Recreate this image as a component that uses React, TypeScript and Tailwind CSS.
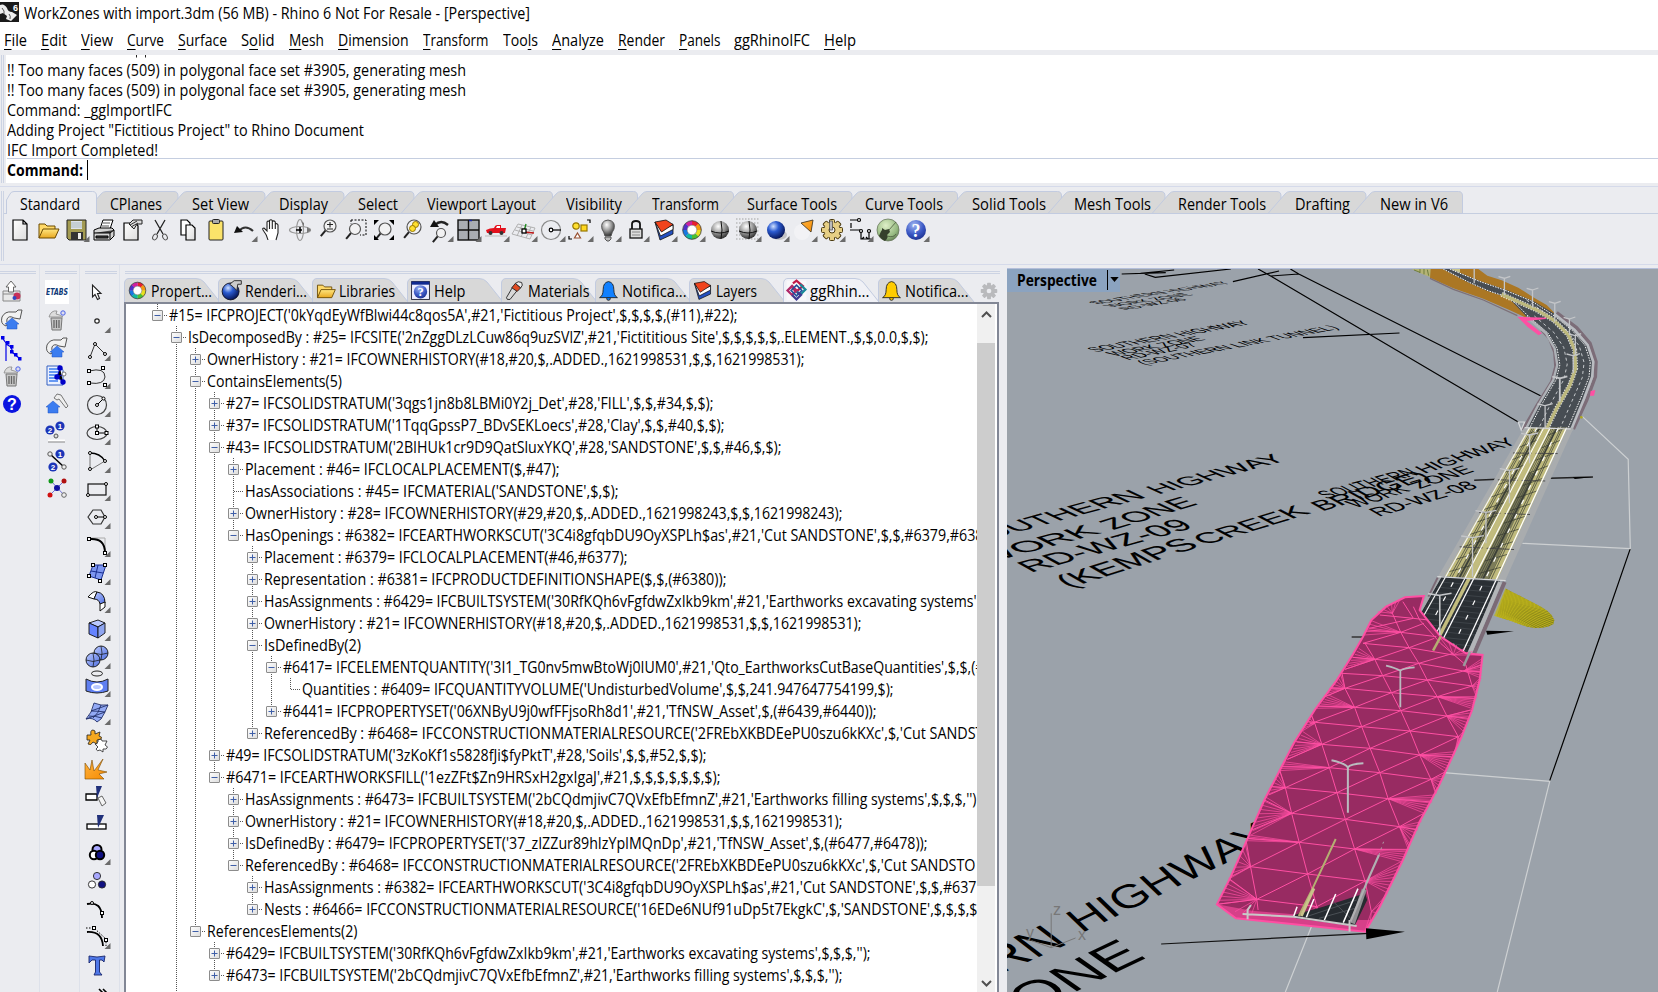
import React, { useLayoutEffect, useRef } from "react";

/* Text squeezed or stretched to a measured width */
function Fit({ w, children, className = "" }: { w: number; children: React.ReactNode; className?: string }) {
  const ref = useRef<HTMLSpanElement>(null);
  useLayoutEffect(() => {
    const el = ref.current;
    if (!el) return;
    el.style.transform = "none";
    const natural = el.getBoundingClientRect().width;
    if (natural > 0) el.style.transform = `scaleX(${w / natural})`;
  }, [w]);
  return (
    <span className={"inline-block shrink-0 whitespace-nowrap " + className} style={{ width: w }}>
      <span ref={ref} className="inline-block origin-left whitespace-nowrap">
        {children}
      </span>
    </span>
  );
}

function Defs() {
  return (
    <svg className="absolute h-0 w-0">
      <defs>
        <radialGradient id="grayBall" cx="0.4" cy="0.3" r="0.75">
          <stop offset="0" stopColor="#fff" />
          <stop offset="0.5" stopColor="#999" />
          <stop offset="1" stopColor="#222" />
        </radialGradient>
        <radialGradient id="blueBall" cx="0.35" cy="0.3" r="0.75">
          <stop offset="0" stopColor="#cfe0ff" />
          <stop offset="0.4" stopColor="#2a5ad0" />
          <stop offset="1" stopColor="#04104f" />
        </radialGradient>
        <radialGradient id="helpBall" cx="0.4" cy="0.25" r="0.8">
          <stop offset="0" stopColor="#9fb4f0" />
          <stop offset="0.6" stopColor="#3a57c4" />
          <stop offset="1" stopColor="#1c2f8c" />
        </radialGradient>
        <radialGradient id="greenBall" cx="0.4" cy="0.3" r="0.75">
          <stop offset="0" stopColor="#dff0c8" />
          <stop offset="0.7" stopColor="#95b980" />
          <stop offset="1" stopColor="#5f7a50" />
        </radialGradient>
        <linearGradient id="gold" x1="0" y1="0" x2="0" y2="1">
          <stop offset="0" stopColor="#ffe680" />
          <stop offset="1" stopColor="#e8a820" />
        </linearGradient>
        <linearGradient id="flame" x1="0" y1="0" x2="1" y2="1">
          <stop offset="0" stopColor="#ffb340" />
          <stop offset="1" stopColor="#f58a00" />
        </linearGradient>
        <linearGradient id="paper" x1="0" y1="0" x2="1" y2="1">
          <stop offset="0" stopColor="#fff" />
          <stop offset="1" stopColor="#dcdcdc" />
        </linearGradient>
        <linearGradient id="surf" x1="0" y1="0" x2="1" y2="1">
          <stop offset="0" stopColor="#b9c8ff" />
          <stop offset="1" stopColor="#4f6fe0" />
        </linearGradient>
      </defs>
    </svg>
  );
}

const Pt = ({ x, y }: { x: number; y: number }) => (
  <rect x={x - 1.5} y={y - 1.5} width="3" height="3" fill="#fff" stroke="#000" />
);
const Dot = ({ x, y }: { x: number; y: number }) => <circle cx={x} cy={y} r="1.5" fill="#fff" stroke="#000" />;
const Lens = ({ x = 16, y = 11, r = 6 }: { x?: number; y?: number; r?: number }) => (
  <g fill="none">
    <path d={`M${x - r * 0.7} ${y + r * 0.7}L${x - r * 0.7 - 5} ${y + r * 0.7 + 6}`} stroke="#222" strokeWidth="2" />
    <circle cx={x} cy={y} r={r} fill="#f4f4f4" fillOpacity="0.8" stroke="#555" strokeWidth="1.2" />
  </g>
);
const Wheel = () => (
  <g fill="none" strokeWidth="4.4">
    {["#e8202c", "#f59a10", "#e8e020", "#4cc030", "#10b8a0", "#1878e0", "#5030c8", "#d020a0"].map((c, i) => (
      <path key={c} d="M14 7A7.2 7.2 0 0 1 19.2 9.1" stroke={c} transform={`rotate(${i * 45} 14 14)`} />
    ))}
    <circle cx="14" cy="14" r="9.3" stroke="#333" strokeWidth="0.8" />
    <circle cx="14" cy="14" r="4.8" stroke="#555" strokeWidth="0.5" fill="#fff" />
  </g>
);
const LayersIcon = () => (
  <g stroke="#111" strokeWidth="0.8" strokeLinejoin="round">
    <path d="M5 6L10 24L23 18V8L11 14Z" fill="#2450c0" />
    <path d="M5 6L10.500 20L23 13.500V9L11 14Z" fill="#fff" />
    <path d="M5 6L16 4L23 8.500L11.500 16Z" fill="#f0441c" />
  </g>
);
const Folder = () => (
  <g stroke="#6b4a00" strokeWidth="1" strokeLinejoin="round">
    <path d="M5 22V8H11L13 10H21V13" fill="#ffd968" />
    <path d="M5 22L9 13H25L21 22Z" fill="url(#gold)" />
  </g>
);
const Trash = () => (
  <g>
    <path d="M8 12H19L18 24H9Z" fill="#c8c8c8" stroke="#777" />
    <path d="M11 14V22M13.500 14V22M16 14V22" stroke="#666" strokeWidth="1.300" />
    <path d="M6 11Q8 4 14 5L13 8Q18 9 20 11Z" fill="#ddd" stroke="#888" strokeWidth="0.800" />
    <circle cx="20" cy="7" r="2.200" fill="#dde" stroke="#4a62e8" />
  </g>
);
const ReloadHouse = () => (
  <g>
    <path d="M8 20Q2 18 4 11Q7 5 14 6L18 6L20 4H24L22 13L16 12Q11 9 9 13Q8 16 10 17Z" fill="#f2f2f2" stroke="#555" strokeWidth="1" />
    <path d="M14 12L21 18H19V23H9V18H7Z" fill="#3b7cf0" stroke="#1c50c0" strokeWidth="0.500" />
  </g>
);
const Num = ({ x, y, n }: { x: number; y: number; n: string }) => (
  <g>
    <circle cx={x} cy={y} r="4.600" fill="#1c35b8" />
    <text x={x} y={y + 3} textAnchor="middle" fontSize="8" fontWeight="700" fill="#fff" fontFamily="Liberation Sans">
      {n}
    </text>
  </g>
);
const Bell = ({ c }: { c: string }) => (
  <g stroke="#222" strokeWidth="1">
    <circle cx="14" cy="23" r="2" fill={c} />
    <path d="M4 22Q8 20 8 13Q8 5 14 4Q20 5 20 13Q20 20 24 22Z" fill={c} />
  </g>
);
const Gear = ({ c, s = "none", hole = "#ebecf0" }: { c: string; s?: string; hole?: string }) => (
  <g>
    {[0, 45, 90, 135].map((a) => (
      <rect key={a} x="11.500" y="3.500" width="5" height="21" rx="1" fill={c} stroke={s} transform={`rotate(${a} 14 14)`} />
    ))}
    <circle cx="14" cy="14" r="7.800" fill={c} />
    <circle cx="14" cy="14" r="3" fill={hole} stroke={s} />
  </g>
);

const icons: Record<string, React.ReactNode> = {
  new: <path d="M7 4H17L21 8V24H7ZM17 4V8H21" fill="url(#paper)" stroke="#000" strokeWidth="1.200" />,
  open: <Folder />,
  save: (
    <g>
      <path d="M5 4H24V24H7L5 22Z" fill="#a39b52" stroke="#222" />
      <rect x="9" y="5" width="11" height="8" fill="#dfe3ea" />
      <path d="M9 7H20M9 9H20M9 11H20" stroke="#9aa" strokeWidth="0.700" />
      <rect x="9" y="16" width="12" height="8" fill="#333" />
      <rect x="16" y="17" width="3" height="6" fill="#eee" />
    </g>
  ),
  print: (
    <g stroke="#000" strokeLinejoin="round">
      <path d="M10 13L13 4H23L20 13Z" fill="#fff" />
      <path d="M13 7H20M12 10H19" stroke="#555" />
      <path d="M4 14L9 12H22L24 14V20L20 24H4Z" fill="#d4d4d4" />
      <path d="M4 17H20L24 14M6 20H18V22H6ZM20 17V23" fill="#444" />
    </g>
  ),
  props: (
    <g>
      <path d="M6 7H18L20 10V24H6Z" fill="url(#paper)" stroke="#000" strokeWidth="1.200" />
      <path d="M11 8L15 4H24V8H19L16 13Z" fill="#ddd" stroke="#222" />
      <path d="M12 9L19 5M13 11L20 7" stroke="#333" />
    </g>
  ),
  cut: (
    <g fill="none" stroke="#222">
      <path d="M9 4L17 18M19 4L11 18" strokeWidth="1.300" />
      <ellipse cx="9" cy="21" rx="2.200" ry="3" stroke="#555" transform="rotate(30 9 21)" />
      <ellipse cx="19" cy="21" rx="2.200" ry="3" stroke="#555" transform="rotate(-30 19 21)" />
    </g>
  ),
  copy: (
    <g fill="#fff" stroke="#000" strokeWidth="1.200">
      <path d="M7 4H13L16 7V19H7Z" />
      <path d="M12 9H18L21 12V24H12Z" fill="url(#paper)" />
    </g>
  ),
  paste: (
    <g stroke="#222">
      <rect x="7" y="5" width="14" height="19" rx="1" fill="#fbe36a" />
      <rect x="10.500" y="3.500" width="7" height="4" rx="1" fill="#aaa" />
    </g>
  ),
  undo: (
    <g>
      <path d="M9 15Q15 8 23 15" fill="none" stroke="#333" strokeWidth="2.200" />
      <path d="M4 17L7 10L13 16Z" fill="#111" />
    </g>
  ),
  hand: (
    <path
      d="M10 24Q9 19 5 14Q4 12 6 12L9 15V6Q10 4 11.500 6V13V4.500Q13 3 14.300 4.500V13V5.500Q16 4 17.300 6V13V8Q19 7 20 9V17L18 24"
      fill="#fff"
      stroke="#222"
      strokeWidth="1.100"
    />
  ),
  rotate: (
    <g fill="none" stroke="#999" strokeWidth="1.200">
      <ellipse cx="14" cy="14" rx="10.500" ry="3.500" />
      <ellipse cx="14" cy="14" rx="3.500" ry="10.500" />
      <path d="M10 14H16M14 11V17" stroke="#000" strokeWidth="1.500" />
      <path d="M15 5L18 7V11Z M21 11L25 14L21 17Z" fill="#777" stroke="none" />
    </g>
  ),
  zoom: (
    <g>
      <Lens y={10} />
      <path d="M13 8.500H19M16 6V11.500M13 13H19" stroke="#222" strokeWidth="1.100" />
    </g>
  ),
  zoomwin: (
    <g>
      <path d="M9 4H24V19H18M9 4V8" fill="none" stroke="#000" strokeDasharray="2 1.500" />
      <Lens x={13} y={13} r={5.500} />
    </g>
  ),
  zoomext: (
    <g>
      <Lens x={15} y={13} />
      <path d="M4 4H9L4 9ZM24 4H19L24 9ZM4 24H9L4 19ZM24 24H19L24 19Z" fill="#000" />
    </g>
  ),
  zoomsel: (
    <g>
      <Lens x={16} y={11} r={7} />
      <circle cx="17.500" cy="8.500" r="3" fill="#ffe030" stroke="#987800" />
      <circle cx="14.500" cy="12.500" r="3" fill="#ffe030" stroke="#987800" />
    </g>
  ),
  zoomundo: (
    <g>
      <Lens x={15} y={17} r={4.500} />
      <path d="M9 9Q15 3 22 9" fill="none" stroke="#222" strokeWidth="2.400" />
      <path d="M4 11L8 4L13 11Z" fill="#111" />
    </g>
  ),
  four: (
    <g>
      <rect x="4" y="4" width="21" height="20" fill="#a9adb3" stroke="#111" strokeWidth="1.400" />
      <path d="M14.500 4V24M4 14H25" stroke="#111" strokeWidth="1.400" />
      <path d="M15 4.500H18" stroke="#1828a0" strokeWidth="1.500" />
    </g>
  ),
  car: (
    <g>
      <path d="M4 14Q8 12 12 12Q13 9 15 9H19V12H24L23 17H5Z" fill="#e3111d" />
      <path d="M15 10H18V12H14Z" fill="#fff" />
      <circle cx="8.500" cy="17" r="2" fill="#333" />
      <circle cx="19.500" cy="17" r="2" fill="#333" />
      <path d="M3 20H25" stroke="#bbb" />
    </g>
  ),
  cplane: (
    <g fill="none" stroke="#aaa" strokeWidth="0.900">
      <path d="M8 8L25 12L20 23L2 18ZM7 11L23 15M5 14L22 19M12 9L7 20M16 10L11 21M21 11L16 22" />
      <path d="M14 15L16 8" stroke="#188818" strokeWidth="1.300" />
      <path d="M14 16L24 17" stroke="#c01818" strokeWidth="1.300" />
      <rect x="12" y="13" width="4" height="4" stroke="#000" fill="#fff" strokeWidth="1.300" />
    </g>
  ),
  circ: (
    <g fill="none" stroke="#888" strokeWidth="1.200">
      <circle cx="13" cy="14" r="9.500" />
      <path d="M14 14H23" stroke="#000" />
      <circle cx="13" cy="14" r="1.800" stroke="#000" fill="#fff" />
    </g>
  ),
  osnap: (
    <g fill="none" stroke="#000" strokeWidth="1.200">
      <circle cx="10" cy="10" r="3.200" fill="#ffe030" stroke="#987800" />
      <rect x="15" y="9" width="6" height="6" fill="#ffd820" stroke="#987800" />
      <path d="M11.500 17L14.500 22H8.500Z" fill="#fff" stroke="#985030" />
      <path d="M21 4H24V7M3 20V23H6" />
    </g>
  ),
  bulb: (
    <g>
      <path d="M11 20Q10 16 8 13Q6 5 14 4Q22 5 20 13Q18 16 17 20Z" fill="url(#grayBall)" stroke="#555" />
      <path d="M11 21H17V23L15 25H13L11 23Z" fill="#bbb" stroke="#555" />
    </g>
  ),
  lock: (
    <g stroke="#111">
      <path d="M10 13V8Q10 5 14 5Q18 5 18 8V13" fill="none" strokeWidth="1.800" />
      <rect x="8" y="13" width="12" height="9" fill="#ddd" strokeWidth="1.300" />
      <path d="M10 16H18M10 19H18" stroke="#888" />
    </g>
  ),
  layers: <LayersIcon />,
  wheel: <Wheel />,
  ball: (
    <g>
      <circle cx="14" cy="14" r="9" fill="url(#grayBall)" />
      <path d="M5 15Q14 19 23 15M15 5Q17 14 15 23" fill="none" stroke="#111" />
    </g>
  ),
  ballgrid: (
    <g>
      <path d="M2 3H26M2 7H26M2 11H26M2 15H26M2 19H26M2 23H26" stroke="#bbb" strokeWidth="1.500" strokeDasharray="1.500 1.500" />
      <circle cx="14" cy="14" r="9" fill="url(#grayBall)" />
      <path d="M5 15Q14 19 23 15M15 5Q17 14 15 23" fill="none" stroke="#111" />
    </g>
  ),
  blueball: (
    <g>
      <ellipse cx="17" cy="19" rx="8" ry="5" fill="#aaa" opacity="0.600" />
      <circle cx="14" cy="14" r="9" fill="url(#blueBall)" />
    </g>
  ),
  spot: (
    <g>
      <circle cx="12" cy="16" r="8" fill="#fff" opacity="0.350" />
      <path d="M11 7L23 4L21 16Z" fill="url(#flame)" stroke="#4a3a20" strokeWidth="0.900" />
    </g>
  ),
  gear: (
    <g>
      <Gear c="#e6cf85" s="#4a3a10" />
      <rect x="11.500" y="5" width="3" height="9" fill="#bbb" stroke="#333" strokeWidth="0.600" />
    </g>
  ),
  dim: (
    <g fill="none" stroke="#000" strokeWidth="1.200">
      <path d="M4 4H12M5 7V12M4 14H14M15 14V23H25M23 15V23M16 23L18 21M22 23L20 21" />
      <Dot x={13} y={4} />
      <Dot x={15} y={15} />
      <Dot x={23} y={15} />
    </g>
  ),
  green: (
    <g>
      <circle cx="14" cy="14" r="11" fill="url(#greenBall)" stroke="#6b7a60" strokeWidth="0.800" />
      <path d="M5 20Q7 15 8 14V12L11 14L15 13L16 16L13 19Q15 21 11 25Q7 23 5 20Z" fill="#35402c" />
      <path d="M15 14L22 6M13 20Q20 22 22 18" stroke="#4a5a3e" fill="none" strokeWidth="0.800" />
    </g>
  ),
  help: (
    <g>
      <circle cx="14" cy="14" r="10" fill="url(#helpBall)" />
      <text x="14" y="20.500" textAnchor="middle" fontSize="18" fontWeight="700" fill="#fff" fontFamily="Liberation Serif">
        ?
      </text>
    </g>
  ),
  export: (
    <g>
      <path d="M5 13H22V23H5ZM5 16H22" fill="#e8e8e8" stroke="#888" />
      <path d="M13 3L18 9H15.500V14H10.500V9H8Z" fill="#fff" stroke="#666" />
      <circle cx="19" cy="18" r="3.500" fill="#c83058" />
      <circle cx="16.500" cy="20" r="2" fill="#3048c0" />
    </g>
  ),
  reload: <ReloadHouse />,
  tree: (
    <g fill="#0000e8">
      <path d="M5 5L8 9V27M8 10L13 13L15 19L21 24" fill="none" stroke="#0000e8" strokeWidth="1.200" />
      <rect x="3" y="2" width="3.500" height="3.500" />
      <rect x="8" y="7" width="3.500" height="3.500" />
      <rect x="12" y="11" width="3.500" height="3.500" />
      <rect x="12" y="16" width="3.500" height="3.500" />
      <rect x="16" y="19" width="3.500" height="3.500" />
      <rect x="20" y="23" width="3.500" height="3.500" />
    </g>
  ),
  trash: <Trash />,
  help2: (
    <g>
      <circle cx="14" cy="14" r="9" fill="#0a14e0" />
      <text x="14" y="20" textAnchor="middle" fontSize="16" fontWeight="700" fill="#fff" fontFamily="Liberation Sans">
        ?
      </text>
    </g>
  ),
  etabs: (
    <g>
      <rect x="2" y="2" width="24" height="24" fill="#fff" />
      <text x="3" y="17" fontSize="8" fontWeight="700" fontStyle="italic" fill="#103a78" fontFamily="DejaVu Sans" textLength="22" lengthAdjust="spacingAndGlyphs">
        ETABS
      </text>
    </g>
  ),
  docblue: (
    <g>
      <path d="M4 4H17L20 8V23H4Z" fill="#eaf0ff" stroke="#3560c0" />
      <path d="M6 7H15M6 10H15M6 13H15M6 16H15M6 19H15" stroke="#3b7cf0" strokeWidth="1.500" />
      <path d="M17 6L14 15L20 20M14 15L21 12" stroke="#0000c8" />
      <g fill="#0000c8">
        <circle cx="17" cy="6" r="2.700" />
        <circle cx="14" cy="15" r="2.700" />
        <circle cx="20" cy="20" r="2.700" />
      </g>
      <circle cx="21" cy="12" r="2" fill="#fff" stroke="#777" />
    </g>
  ),
  hammer: (
    <g>
      <path d="M10 11L17 17H15V23H5V17H3Z" fill="#3b7cf0" stroke="#1c50c0" strokeWidth="0.500" />
      <path d="M11 8L14 4L18 5L25 16L23 18L16 9L14 10Z" fill="#eee" stroke="#777" />
    </g>
  ),
  nums1: (
    <g>
      <Num x={7} y={12} n="2" />
      <Num x={17} y={8} n="1" />
      <circle cx="13" cy="18" r="2" fill="#ddd" stroke="#555" />
      <path d="M5 22.500H22" stroke="#fff" strokeWidth="2" />
      <path d="M5 24H22" stroke="#888" />
    </g>
  ),
  nums2: (
    <g>
      <path d="M7 8L21 21" stroke="#000" strokeWidth="1.500" />
      <Num x={17} y={8} n="1" />
      <Num x={10} y={21} n="2" />
      <circle cx="7" cy="8" r="2.200" fill="#eee" stroke="#555" />
      <circle cx="21" cy="21" r="2.200" fill="#eee" stroke="#555" />
    </g>
  ),
  net: (
    <g>
      <path d="M8 7L21 21M21 7L7 21" stroke="#7070d8" />
      <circle cx="8" cy="7" r="2.500" fill="#109818" />
      <circle cx="21" cy="7" r="2.500" fill="#b01010" />
      <circle cx="14" cy="14" r="3" fill="#1010a0" />
      <circle cx="7" cy="21" r="2.500" fill="#d01010" />
      <circle cx="21" cy="21" r="2.300" fill="#eee" stroke="#666" />
    </g>
  ),
  pointer: <path d="M9.500 6V18L12 15.500L14.500 20.500L16.500 19.500L14.500 14.500H18Z" fill="#fff" stroke="#222" strokeWidth="1.100" />,
  point: <circle cx="14" cy="14" r="2.200" fill="#fff" stroke="#222" strokeWidth="1.200" />,
  poly: (
    <g>
      <path d="M7 22L12 9L22 19" fill="none" stroke="#333" />
      <Dot x={7} y={22} />
      <Dot x={12} y={9} />
      <Dot x={22} y={19} />
    </g>
  ),
  curve: (
    <g>
      <path d="M6 8Q22 4 22 14Q21 22 7 20" fill="none" stroke="#333" />
      <Pt x={6} y={8} />
      <Pt x={20} y={5} />
      <Pt x={6} y={20} />
      <Pt x={22} y={22} />
    </g>
  ),
  circle: (
    <g>
      <circle cx="14" cy="14" r="9.500" fill="none" stroke="#444" strokeWidth="1.200" />
      <path d="M14 14L20 8" stroke="#000" />
      <Dot x={14} y={14} />
      <Dot x={20.500} y={7.500} />
    </g>
  ),
  ellipse: (
    <g>
      <ellipse cx="14" cy="14" rx="10" ry="6.500" fill="none" stroke="#444" strokeWidth="1.200" />
      <path d="M14 14H23M14 14V8" stroke="#000" />
      <Pt x={14} y={14} />
      <Pt x={14} y={7.500} />
      <Pt x={23.500} y={14} />
    </g>
  ),
  arc: (
    <g>
      <path d="M7 23V6M7 23L22 14" fill="none" stroke="#777" />
      <path d="M7 6Q17 6 22 14" fill="none" stroke="#000" strokeWidth="1.300" />
      <Dot x={7} y={6} />
      <Dot x={22} y={14} />
      <Dot x={7} y={22} />
    </g>
  ),
  rect: (
    <g>
      <rect x="5" y="9" width="18" height="11" fill="none" stroke="#111" strokeWidth="1.200" />
      <Dot x={23} y={9} />
      <Dot x={5} y={20} />
    </g>
  ),
  hex: (
    <g>
      <path d="M5 14L10 7H18L22 14L18 21H10Z" fill="none" stroke="#333" strokeWidth="1.200" />
      <path d="M14 14H22" stroke="#000" />
      <Dot x={13} y={14} />
      <Dot x={22} y={14} />
    </g>
  ),
  fillet: (
    <g>
      <path d="M7 7H22V22" fill="none" stroke="#aaa" />
      <path d="M7 8Q22 7 22 22" fill="none" stroke="#000" strokeWidth="2" />
      <Pt x={6} y={8} />
      <Pt x={22} y={22} />
    </g>
  ),
  srfpts: (
    <g>
      <path d="M10 6L23 6L18 21L6 17Z" fill="#7d96f0" stroke="#1a2f90" />
      <path d="M8 12L20 14M15 6L12 19" stroke="#1a2f90" />
      <Pt x={10} y={6} />
      <Pt x={22} y={6} />
      <Pt x={6} y={17} />
      <Pt x={17} y={22} />
    </g>
  ),
  bend: (
    <g stroke="#111">
      <path d="M5 10Q11 3 14 5L11 12Z" fill="#fff" />
      <path d="M14 5Q22 6 22 16L17 17Q16 12 11 12Z" fill="url(#surf)" />
      <path d="M17 17L22 15V20L17 24Z" fill="#fff" />
    </g>
  ),
  box: (
    <g stroke="#111" strokeLinejoin="round" strokeWidth="0.900">
      <path d="M6 8L15 5L22 8L15 12Z" fill="#b9c8ff" />
      <path d="M6 8L15 12V23L6 19Z" fill="#6684ff" />
      <path d="M15 12L22 8V18L15 23Z" fill="#8fa5f0" />
    </g>
  ),
  balls: (
    <g stroke="#111" strokeWidth="0.900">
      <circle cx="18" cy="10" r="7" fill="url(#surf)" />
      <circle cx="10" cy="17" r="7" fill="url(#surf)" />
      <path d="M11 10Q18 13 25 10M18 3Q20 10 18 17M3 17Q10 20 17 17M10 10Q12 17 10 24" fill="none" strokeWidth="0.700" />
    </g>
  ),
  project: (
    <g stroke="#222">
      <ellipse cx="14" cy="2.500" rx="5.500" ry="2.500" fill="none" />
      <path d="M3 8Q14 14 25 8V20Q14 24 3 20Z" fill="#5f7ff0" />
      <ellipse cx="14" cy="16" rx="5" ry="3" fill="#b8c8ff" stroke="#fff" strokeWidth="2" />
    </g>
  ),
  mesh: (
    <g stroke="#22306a" strokeWidth="0.900">
      <path d="M11 4Q18 7 25 6Q22 14 18 20L14 23Q10 18 3 20Q9 14 11 4Z" fill="#93aaf5" />
      <path d="M8 12Q15 12 22 13M18 6Q16 14 10 19M6 17Q13 17 19 19M3 20L22 13M8 12L25 6" fill="none" />
    </g>
  ),
  puzzle: (
    <g stroke="#222" strokeWidth="0.800">
      <path d="M12 17L15 15Q14 12 17 12Q19 12 19 14L24 14L22 18Q26 20 23 22L20 22L20 25L17 23Q14 25 13 22L15 20Z" fill="#fff" />
      <path d="M4 8L8 8Q7 3 10 3Q13 3 12 7L17 5L16 9Q20 10 18 12L14 13L14 17L10 15Q8 19 5 17L7 13L4 13Z" fill="#f5a820" />
    </g>
  ),
  explode: <path d="M2 24V8L7 15L9 5L11 16L20 4L15 15L24 17L16 19L21 24Z" fill="url(#flame)" stroke="#7a4a00" strokeWidth="0.600" />,
  trim: (
    <g stroke="#000">
      <path d="M3 11H14V17H3Z" fill="#fff" strokeWidth="1.300" />
      <path d="M15 15L19 13L23 20L19 23Z" fill="#f4f4f4" stroke="#666" />
      <path d="M13 3H19L14 15Z" fill="#20307a" stroke="none" />
    </g>
  ),
  split: (
    <g>
      <rect x="4" y="13" width="19" height="5" fill="#fff" stroke="#000" strokeWidth="1.300" />
      <path d="M14 4H21L15 17Z" fill="#20307a" />
    </g>
  ),
  group: (
    <g stroke="#000" strokeWidth="2">
      <circle cx="14" cy="10.500" r="4.500" fill="#a8a8ff" />
      <circle cx="11" cy="16" r="4.200" fill="#fff" />
      <circle cx="17" cy="16" r="4.200" fill="#101080" />
    </g>
  ),
  ungroup: (
    <g stroke="#222" strokeWidth="0.900">
      <circle cx="14" cy="9" r="3.600" fill="#a8a8ff" />
      <circle cx="9" cy="17.500" r="3.600" fill="#fff" />
      <circle cx="19" cy="17.500" r="3.600" fill="#101080" />
    </g>
  ),
  cvedit: (
    <g>
      <path d="M4 9Q19 6 19 23" fill="none" stroke="#000" strokeWidth="1.800" />
      <Dot x={9} y={8} />
      <Pt x={19} y={18} />
    </g>
  ),
  cvcp: (
    <g>
      <path d="M4 9Q19 8 20 23" fill="none" stroke="#000" strokeWidth="1.800" />
      <path d="M3 5H11L23 16V23" fill="none" stroke="#000" strokeDasharray="1.500 1.500" />
      <Pt x={11} y={5} />
      <Pt x={23} y={17} />
    </g>
  ),
  text: (
    <g stroke="#16246a" strokeWidth="0.900">
      <path d="M6 5Q14 7 22 5L21 11L19 9H16.500V21L19 24H11L12.500 21V9H9L6 12Z" fill="#4f78e8" />
    </g>
  ),
  more: <path d="M16 10L20 14L16 18M20 10L24 14L20 18" fill="none" stroke="#000" strokeWidth="1.600" />,
  render: (
    <g>
      <circle cx="13" cy="15" r="9.500" fill="url(#blueBall)" stroke="#112" />
      <path d="M12 7L17 3H25V7H21L20 14L16 10Z" fill="#ccc" stroke="#222" />
    </g>
  ),
  helpwin: (
    <g>
      <rect x="4" y="4" width="20" height="20" fill="#eef" stroke="#223" />
      <rect x="4" y="4" width="20" height="3.500" fill="#112a90" />
      <circle cx="14" cy="15.500" r="7.500" fill="url(#helpBall)" />
      <text x="14" y="20.500" textAnchor="middle" fontSize="14" fontWeight="700" fill="#fff" fontFamily="Liberation Serif">
        ?
      </text>
    </g>
  ),
  tube: (
    <g stroke="#222" strokeLinejoin="round">
      <path d="M5 22L12 10L17 14L9 24Q5 25 5 22Z" fill="#d8d8d8" />
      <path d="M11 11L15 6L21 11L17 15Z" fill="#e04a20" />
      <path d="M15 6Q18 3 22 5Q24 8 21 11Z" fill="#eee" />
    </g>
  ),
  bellb: <Bell c="#1080ff" />,
  belly: <Bell c="#ffcc00" />,
  gg: (
    <g fill="none" strokeWidth="2.600">
      <rect x="3" y="3" width="22" height="22" fill="#f8f8fa" stroke="none" />
      <path d="M10 6L14 3L21 9L14 15L9 11" stroke="#c01848" />
      <path d="M18 7L24 13L18 19L14 15" stroke="#188898" />
      <path d="M10 8L4 14L9 19L14 14L10 10" stroke="#b02868" />
      <path d="M8 14L14 8L20 14L14 20Z" stroke="#20509c" strokeWidth="1.800" />
      <path d="M9 19L14 24L19 19L15 16" stroke="#403a90" />
    </g>
  ),
};

function Icon({ n, fly, size = "h-7 w-7" }: { n: string; fly?: boolean; size?: string }) {
  return (
    <svg viewBox="0 0 28 28" className={"shrink-0 overflow-visible " + size}>
      {icons[n]}
      {fly && <path d="M27.500 20V26H21.500Z" fill="#6b6b6b" />}
    </svg>
  );
}

const menu: [string, string, string, number, number][] = [
  ["", "F", "ile", 4, 27],
  ["", "E", "dit", 41, 67],
  ["", "V", "iew", 81, 113],
  ["", "C", "urve", 127, 164],
  ["", "S", "urface", 178, 227],
  ["S", "o", "lid", 241, 274.5],
  ["", "M", "esh", 289, 324],
  ["", "D", "imension", 338, 408.5],
  ["", "T", "ransform", 423, 488.5],
  ["Too", "l", "s", 503, 538],
  ["", "A", "nalyze", 552, 604],
  ["", "R", "ender", 618, 665],
  ["", "P", "anels", 678.5, 720],
  ["ggRhinoIFC", "", "", 734, 810],
  ["", "H", "elp", 824, 856],
];

const log: [string, number][] = [
  ["!! Too many faces (509) in polygonal face set #3905, generating mesh", 459],
  ["!! Too many faces (509) in polygonal face set #3905, generating mesh", 459],
  ["Command: _ggImportIFC", 165],
  ['Adding Project "Fictitious Project" to Rhino Document', 357],
  ["IFC Import Completed!", 151],
];

const toolTabs: [string, number, number, number, number][] = [
  ["Standard", 6, 96.5, 20, 80],
  ["CPlanes", 96.5, 177.5, 110, 162],
  ["Set View", 177.5, 264.5, 192, 249],
  ["Display", 264.5, 343.5, 279, 328],
  ["Select", 343.5, 413.5, 358, 398],
  ["Viewport Layout", 413.5, 552, 427, 536],
  ["Visibility", 552, 637.5, 566, 622],
  ["Transform", 637.5, 733, 651.5, 718.5],
  ["Surface Tools", 733, 852, 747, 837],
  ["Curve Tools", 852, 957.5, 865, 943],
  ["Solid Tools", 957.5, 1061, 972, 1046],
  ["Mesh Tools", 1061, 1165, 1074, 1151],
  ["Render Tools", 1165, 1281, 1178, 1266],
  ["Drafting", 1281, 1366, 1295, 1350],
  ["New in V6", 1366, 1462.5, 1380, 1448],
];

const toolbar =
  "new open save* print props cut copy paste undo* hand rotate zoom zoomwin zoomext zoomsel zoomundo* four* car* cplane* circ* osnap* bulb* lock* layers* wheel* ball ballgrid* blueball* spot* gear* dim* green help*".split(" ");
const side1 = "export reload tree trash help2".split(" ");
const side2 = "etabs trash reload docblue hammer nums1 nums2 net".split(" ");
const side3 =
  "pointer point* poly* curve* circle* ellipse* arc* rect* hex* fillet* srfpts* bend* box* balls* project* mesh* puzzle explode trim split group* ungroup cvedit cvcp* text more".split(" ");

const panelTabs: [string, string, number][] = [
  ["wheel", "Propert...", 61],
  ["render", "Renderi...", 62],
  ["open", "Libraries", 56],
  ["helpwin", "Help", 31.5],
  ["tube", "Materials", 61.5],
  ["bellb", "Notifica...", 64.5],
  ["layers", "Layers", 41],
  ["gg", "ggRhin...", 59.5],
  ["belly", "Notifica...", 63.5],
];

/* level, expander, label, right edge of the label */
const rows: [number, string, string, number][] = [
  [0, "-", "#15= IFCPROJECT('0kYqdEyWfBlwi44c8qos5A',#21,'Fictitious Project',$,$,$,$,(#11),#22);", 737],
  [1, "-", "IsDecomposedBy : #25= IFCSITE('2nZggDLzLCuw86q9uzSVlZ',#21,'Fictititious Site',$,$,$,$,$,.ELEMENT.,$,$,0.0,$,$);", 928],
  [2, "+", "OwnerHistory : #21= IFCOWNERHISTORY(#18,#20,$,.ADDED.,1621998531,$,$,1621998531);", 804],
  [2, "-", "ContainsElements(5)", 341.5],
  [3, "+", "#27= IFCSOLIDSTRATUM('3qgs1jn8b8LBMi0Y2j_Det',#28,'FILL',$,$,#34,$,$);", 713],
  [3, "+", "#37= IFCSOLIDSTRATUM('1TqqGpssP7_BDvSEKLoecs',#28,'Clay',$,$,#40,$,$);", 724],
  [3, "-", "#43= IFCSOLIDSTRATUM('2BIHUk1cr9D9QatSluxYKQ',#28,'SANDSTONE',$,$,#46,$,$);", 781],
  [4, "+", "Placement : #46= IFCLOCALPLACEMENT($,#47);", 559],
  [4, "", "HasAssociations : #45= IFCMATERIAL('SANDSTONE',$,$);", 618],
  [4, "+", "OwnerHistory : #28= IFCOWNERHISTORY(#29,#20,$,.ADDED.,1621998243,$,$,1621998243);", 842],
  [4, "-", "HasOpenings : #6382= IFCEARTHWORKSCUT('3C4i8gfqbDU9OyXSPLh$as',#21,'Cut SANDSTONE',$,$,#6379,#638", 983],
  [5, "+", "Placement : #6379= IFCLOCALPLACEMENT(#46,#6377);", 627],
  [5, "+", "Representation : #6381= IFCPRODUCTDEFINITIONSHAPE($,$,(#6380));", 726],
  [5, "+", "HasAssignments : #6429= IFCBUILTSYSTEM('30RfKQh6vFgfdwZxIkb9km',#21,'Earthworks excavating systems'", 976],
  [5, "+", "OwnerHistory : #21= IFCOWNERHISTORY(#18,#20,$,.ADDED.,1621998531,$,$,1621998531);", 861],
  [5, "-", "IsDefinedBy(2)", 360.5],
  [6, "-", "#6417= IFCELEMENTQUANTITY('3I1_TG0nv5mwBtoWj0IUM0',#21,'Qto_EarthworksCutBaseQuantities',$,$,(#", 984],
  [7, "", "Quantities : #6409= IFCQUANTITYVOLUME('UndisturbedVolume',$,$,241.947647754199,$);", 893],
  [6, "+", "#6441= IFCPROPERTYSET('06XNByU9j0wfFFjsoRh8d1',#21,'TfNSW_Asset',$,(#6439,#6440));", 876],
  [5, "+", "ReferencedBy : #6468= IFCCONSTRUCTIONMATERIALRESOURCE('2FREbXKBDEePU0szu6kKXc',$,'Cut SANDST", 983],
  [3, "+", "#49= IFCSOLIDSTRATUM('3zKoKf1s5828fJi$fyPktT',#28,'Soils',$,$,#52,$,$);", 706],
  [3, "-", "#6471= IFCEARTHWORKSFILL('1ezZFt$Zn9HRSxH2gxIgaJ',#21,$,$,$,$,$,$,$);", 720],
  [4, "+", "HasAssignments : #6473= IFCBUILTSYSTEM('2bCQdmjivC7QVxEfbEfmnZ',#21,'Earthworks filling systems',$,$,$,'')", 976],
  [4, "+", "OwnerHistory : #21= IFCOWNERHISTORY(#18,#20,$,.ADDED.,1621998531,$,$,1621998531);", 842],
  [4, "+", "IsDefinedBy : #6479= IFCPROPERTYSET('37_zIZZur89hIzYpIMQnDp',#21,'TfNSW_Asset',$,(#6477,#6478));", 927],
  [4, "-", "ReferencedBy : #6468= IFCCONSTRUCTIONMATERIALRESOURCE('2FREbXKBDEePU0szu6kKXc',$,'Cut SANDSTO", 975],
  [5, "+", "HasAssignments : #6382= IFCEARTHWORKSCUT('3C4i8gfqbDU9OyXSPLh$as',#21,'Cut SANDSTONE',$,$,#637", 976],
  [5, "+", "Nests : #6466= IFCCONSTRUCTIONMATERIALRESOURCE('16EDe6NUf91uDp5t7EkgkC',$,'SANDSTONE',$,$,$,$", 977],
  [2, "-", "ReferencesElements(2)", 357],
  [3, "+", "#6429= IFCBUILTSYSTEM('30RfKQh6vFgfdwZxIkb9km',#21,'Earthworks excavating systems',$,$,$,'');", 870],
  [3, "+", "#6473= IFCBUILTSYSTEM('2bCQdmjivC7QVxEfbEfmnZ',#21,'Earthworks filling systems',$,$,$,'');", 842],
  [1, "", "", 189],
];

function continues(i: number, level: number) {
  for (let j = i + 1; j < rows.length; j++) {
    if (rows[j][0] === level) return true;
    if (rows[j][0] < level) return false;
  }
  return false;
}

function TreeRow({ i }: { i: number }) {
  const [level, exp, label, right] = rows[i];
  return (
    <div className="flex h-[22px] items-center">
      {Array.from({ length: level }, (_, k) => (
        <svg key={k} viewBox="0 0 19 22" className="h-[22px] w-[19px] shrink-0">
          {continues(i, k) && <path d="M9.500 0V22" stroke="#555" strokeDasharray="1 1" />}
        </svg>
      ))}
      <svg viewBox="0 0 19 22" className="h-[22px] w-[19px] shrink-0">
        <path d={continues(i, level) ? "M9.500 0V22" : "M9.500 0V11"} stroke="#555" strokeDasharray="1 1" />
        <path d="M10 11.500H19" stroke="#555" strokeDasharray="1 1" />
        {exp && (
          <g>
            <rect x="4.500" y="6.500" width="10" height="10" rx="0.500" fill="url(#paper)" stroke="#8c8c8c" />
            <path d={exp === "+" ? "M6.500 11.500H12.500M9.500 8.500V14.500" : "M6.500 11.500H12.500"} stroke="#3f5fa8" />
          </g>
        )}
      </svg>
      <Fit w={right - 168.5 - 19 * level} className="ml-[1.5px] leading-[22px]">
        {label}
      </Fit>
    </div>
  );
}

/* ---------- 3D view ---------- */
type P = [number, number];
const roadL: P[] = [[128, 12], [200, 50], [262, 78], [325, 98], [380, 155], [438, 205], [464, 250], [472, 300], [460, 345], [415, 420], [375, 497]];
const roadR: P[] = [[152, 12], [240, 48], [320, 75], [400, 108], [465, 147], [525, 195], [565, 240], [582, 290], [579, 335], [555, 400], [515, 497]];
const median: P[] = [[305, 88], [350, 108], [410, 135], [462, 166], [505, 210], [524, 255], [527, 310], [510, 360], [470, 430], [436, 500]];
const along = (t: number) => roadL.map(([x, y], i) => [x + (roadR[i][0] - x) * t, y + (roadR[i][1] - y) * t] as P);
const pts = (a: P[]) => a.map((p) => p.join(",")).join(" ");
/* straight stretch: s = 0 at the bend, 1 where the bridge ends */
const deck = (t: number, s: number): P => [1257 + 100 * t + s * (-202 + 37 * t), 503 + s * (447 + 10 * t)];
const Deck = ({ t, a, b, ...r }: { t: number; a: number; b: number } & React.SVGProps<SVGPolylineElement>) => (
  <polyline points={pts([deck(t, a), deck(t, b)])} fill="none" vectorEffect="non-scaling-stroke" {...r} />
);

const meshLines: P[][] = [
  [[935, 40], [955, 97], [975, 143], [998, 190], [1018, 240], [1042, 290], [1065, 348], [1092, 410]],
  [[870, 130], [893, 178], [912, 227], [933, 278], [955, 332], [977, 393], [1000, 465], [1027, 538], [1040, 580]],
  [[815, 220], [822, 265], [845, 322], [862, 380], [882, 445], [905, 518], [925, 596], [952, 680], [975, 740]],
  [[742, 345], [750, 370], [767, 433], [785, 503], [803, 578], [823, 658], [845, 747], [870, 843], [885, 935]],
  [[667, 512], [680, 563], [695, 640], [713, 727], [733, 822], [755, 920]],
  [[587, 725], [597, 800], [612, 898], [615, 930]],
  [[517, 913], [612, 898], [755, 920]],
  [[545, 835], [612, 898], [733, 822], [845, 747], [952, 680], [1010, 640]],
  [[597, 800], [733, 822], [870, 843]],
  [[550, 830], [597, 800], [713, 727], [823, 658], [925, 596], [1027, 538], [1062, 515]],
  [[590, 715], [713, 727], [845, 747], [970, 750]],
  [[600, 690], [695, 640], [803, 578], [905, 518], [1000, 465], [1092, 410]],
  [[630, 600], [695, 640], [823, 658], [952, 680], [995, 690]],
  [[640, 585], [680, 563], [785, 503], [882, 445], [977, 393], [1065, 348], [1122, 330]],
  [[645, 560], [680, 563], [803, 578], [925, 596], [1030, 606]],
  [[672, 500], [785, 503], [905, 518], [1027, 538]],
  [[685, 478], [767, 433], [862, 380], [955, 332], [1042, 290], [1125, 258]],
  [[705, 425], [767, 433], [882, 445], [1000, 465], [1075, 470]],
  [[735, 365], [862, 380], [977, 393], [1092, 410]],
  [[738, 372], [845, 322], [933, 278], [1018, 240], [1105, 213], [1148, 195]],
  [[757, 318], [845, 322], [955, 332], [1065, 348], [1118, 355]],
  [[785, 265], [822, 265], [933, 278], [1042, 290], [1135, 295]],
  [[775, 290], [822, 265], [912, 227], [998, 190], [1080, 160]],
  [[815, 220], [912, 227], [1018, 240], [1125, 258]],
  [[822, 208], [893, 178], [975, 143], [1035, 115]],
  [[840, 172], [893, 178], [998, 190], [1105, 213], [1145, 215]],
  [[865, 130], [975, 143], [1080, 165]],
  [[865, 130], [955, 97], [1010, 70]],
  [[875, 90], [955, 97], [1040, 110]],
  [[905, 45], [985, 55], [1020, 60]],
  [[880, 85], [985, 55], [960, 5]],
  [[985, 20], [1000, 60], [1050, 130], [1110, 195], [1125, 258]],
  [[755, 920], [870, 843]],
];
/* apex x, y, then edge start and end, ray count */
const fans: number[][] = [
  [935, 40, 900, 35, 955, -5, 6], [955, 97, 868, 105, 885, 62, 5], [893, 178, 822, 208, 855, 145, 8], [822, 265, 773, 290, 812, 225, 8],
  [845, 322, 755, 325, 783, 285, 7], [750, 370, 718, 395, 742, 345, 6], [767, 433, 684, 478, 722, 395, 9], [785, 503, 667, 512, 675, 485, 5],
  [680, 563, 640, 582, 667, 515, 7], [695, 640, 598, 705, 632, 590, 10], [713, 727, 588, 722, 593, 705, 4], [597, 800, 548, 835, 585, 735, 7],
  [612, 898, 517, 913, 548, 840, 7], [612, 898, 560, 935, 600, 940, 3], [1105, 213, 1148, 235, 1150, 175, 8], [1125, 258, 1136, 292, 1146, 232, 7],
  [1042, 290, 1124, 325, 1137, 290, 7], [1065, 348, 1105, 395, 1122, 330, 8], [1092, 410, 1082, 465, 1108, 390, 6], [1000, 465, 1062, 515, 1085, 455, 8],
  [1027, 538, 1037, 578, 1060, 525, 6], [925, 596, 1012, 640, 1035, 585, 8], [952, 680, 972, 745, 1005, 665, 8], [845, 747, 958, 785, 970, 748, 6],
  [870, 843, 925, 880, 955, 785, 9], [885, 935, 870, 990, 920, 885, 5], [755, 920, 735, 915, 770, 950, 7], [1080, 165, 1050, 115, 1145, 165, 6],
];
const pinkEdge =
  "M1010 -12L965 -8L920 20L885 60L865 110L840 165L800 245L750 330L700 430L665 515L630 600L590 715L550 830L517 913L562 955L870 995L905 920L960 780L1000 665L1045 560L1100 410L1125 330L1143 240L1150 165L1110 160L1050 110L1000 30Z";

/* text laid on the ground plane: baseline ends and the vector of a capital's height */
const ground: [string, number, number, number, number, number, number, number][] = [
  ["SOUTHERN HIGHWAY", 232, 133, 552, 70, -25, -6, 0.3],
  ["WORK ZONE", 268, 142, 462, 105, -25, -6, 0.3],
  ["RD-WZ-06", 300, 151, 448, 119, -22, -6, 0.3],
  ["SOUTHERN HIGHWAY", 229, 276, 600, 192, -26, -11, 0.4],
  ["WORK ZONE", 275, 289, 492, 239, -26, -11, 0.4],
  ["RD-WZ-07", 307, 301, 475, 257, -24, -11, 0.4],
  ["(SOUTHERN LINK TUNNEL)", 345, 315, 810, 206, -24, -11, 0.4],
  ["SOUTHERN", -72, 855, 352, 711, -40, -24, 0.6],
  ["HIGHWAY", 378, 703, 685, 600, -36, -20, 0.6],
  ["WORK", -35, 912, 243, 818, -40, -26, 0.6],
  ["ZONE", 270, 810, 474, 732, -40, -24, 0.6],
  ["RD-WZ-09", 73, 938, 465, 802, -40, -28, 0.6],
  ["(KEMPS", 165, 984, 478, 860, -42, -30, 0.6],
  ["CREEK", 490, 856, 742, 759, -38, -25, 0.6],
  ["BRIDGE)", 768, 754, 1030, 655, -34, -24, 0.6],
  ["SOUTHERN", 780, 718, 1000, 643, -29, -20, 0.5],
  ["HIGHWAY", 1012, 641, 1234, 550, -28, -19, 0.5],
  ["WORK", 848, 745, 980, 692, -29, -20, 0.5],
  ["ZONE", 1000, 687, 1132, 634, -28, -19, 0.5],
  ["RD-WZ-08", 903, 770, 1142, 682, -29, -21, 0.5],
  ["ERN", -75, 2185, 166, 2050, -62, -60, 0],
  ["HIGHWAY", 194, 2020, 655, 1738, -46, -56, 0],
  ["ONE", 72, 2260, 352, 2092, -68, -60, 0],
];
const adv: Record<string, number> = { I: 28, "(": 33, ")": 33, "-": 33, " ": 28, L: 56, T: 61, E: 67, Z: 61, P: 67, K: 67, S: 67, W: 94, M: 83, O: 78, G: 78, A: 67, Y: 67, B: 67 };

function GroundText() {
  return (
    <g fontFamily="Liberation Sans" fontSize="100" fill="#000" stroke="#000">
      {ground.map(([s, x0, y0, x1, y1, ux, uy, sw], i) => {
        let len = 0;
        for (const ch of s) len += adv[ch] ?? (ch >= "0" && ch <= "9" ? 56 : 72);
        const m = [(x1 - x0) / len, (y1 - y0) / len, -ux / 70, -uy / 70, x0, y0];
        return (
          <text key={i} transform={`matrix(${m.join(" ")})`} textLength={len} lengthAdjust="spacingAndGlyphs" strokeWidth={sw}>
            {s}
          </text>
        );
      })}
    </g>
  );
}

const Lamp = ({ x, y, b, w = 14, s = 1.3 }: { x: number; y: number; b: number; w?: number; s?: number }) => (
  <path
    d={`M${x} ${b}V${y + 5}L${x - w} ${y}M${x} ${y + 5}L${x + w} ${y - 1}`}
    fill="none"
    stroke="#c4c6c9"
    strokeWidth={s}
    vectorEffect="non-scaling-stroke"
  />
);

const rim: P[] = [[318, 506], [340, 518], [362, 529], [383, 540], [405, 551], [425, 562], [442, 573], [455, 586], [463, 600], [460, 612], [447, 619], [428, 623], [405, 624], [382, 620], [358, 612], [335, 603], [312, 596], [290, 588]];

function Scene() {
  const ns = { vectorEffect: "non-scaling-stroke" as const, fill: "none" };
  return (
    <svg viewBox="1007 269 651 723" className="h-[723px] w-[651px] shrink-0">
      <rect x="1007" y="269" width="651" height="723" fill="#9ba2aa" />
      <g transform="translate(1000 260) scale(0.419640 0.333333)">
        <g stroke="#000" strokeWidth="1.2">
          <path {...ns} d="M615 27L645 48L1235 486M692 27L712 42L1288 407M645 48L712 42M555 65L665 33M290 42L395 38M345 42L370 52L550 27M335 40L415 30M722 233L952 219M1502 866L1435 1110L1310 1562" />
        </g>
        <path {...ns} d="M1130 661L1200 657M1310 655L1413 651" stroke="#222" strokeWidth="1.5" />
        <path d="M1365 652L1413 651L1370 657Z" />
        <path {...ns} d="M1388 470L1497 598L1502 866L1245 850M1050 1537L1310 1564L1185 2196M742 2000L680 2196" stroke="#cdd0d2" strokeWidth="1.2" />
        <GroundText />
        <path {...ns} d="M838 1131H865" stroke="#333" strokeWidth="1.5" />
      </g>

      {/* far bend */}
      <g transform="translate(1400 265) scale(0.333333)">
        <path d="M35 12H95V38L60 24Z" fill="#b4b375" />
        <path {...ns} d="M42 15L60 22M60 12V24M72 12V28M82 14L86 32" stroke="#5d7030" strokeWidth="0.8" />
        <path d="M92 12H235L262 32L305 46L355 68L402 98L440 120L463 143L440 150L375 157L330 136L250 101L160 70L90 38Z" fill="#ab7724" />
        <path d="M135 12H180V28H160Z" fill="#c8c38a" />
        <path {...ns} d="M90 40L160 73L250 105L352 152" stroke="#7d7078" strokeWidth="1.2" />
        <path {...ns} d="M425 195L448 220L464 262L467 305L455 350L410 422L368 495" stroke="#7c6d78" strokeWidth="3" />
        <path {...ns} d="M470 143L530 188L570 235L588 290L586 335L560 405L520 492" stroke="#7c6d78" strokeWidth="3.5" />
        <polygon points={pts([...along(0), ...along(1).reverse()])} fill="#474d53" />
        <polyline points={pts(along(0).slice(4))} {...ns} stroke="#aeb2b7" strokeWidth="2.4" />
        <polyline points={pts(along(0.98).slice(4))} {...ns} stroke="#b9bcc1" strokeWidth="2.6" />
        <polyline points={pts(along(0.07))} {...ns} stroke="#fff" strokeWidth="1" strokeDasharray="1.500 1.200" />
        <polyline points={pts(along(0.9))} {...ns} stroke="#fff" strokeWidth="1" strokeDasharray="1.500 1.200" />
        <polyline points={pts(along(0.27).slice(4))} {...ns} stroke="#d5d8da" strokeWidth="0.9" strokeDasharray="3 3" />
        <polyline points={pts(along(0.73).slice(3))} {...ns} stroke="#d5d8da" strokeWidth="0.9" strokeDasharray="3 3" />
        <polyline points={pts(median)} {...ns} stroke="#fff" strokeWidth="5" strokeDasharray="1.500 1.200" strokeOpacity="0.8" />
        <polyline points={pts(median)} {...ns} stroke="#bdb97e" strokeWidth="3.2" />
        <path d="M352 155L440 158L436 162L380 168L426 205L416 211L383 186Z" fill="#ff4fa3" />
        <path d="M572 378L586 375L582 392L570 392Z" fill="#ff4fa3" />
        <circle cx="544" cy="457" r="4" fill="#b0a820" />
      </g>

      <g transform="translate(1000 260) scale(0.419640 0.333333)">
        <polygon points={pts([deck(-0.08, 0), deck(1.1, 0), deck(1.09, 1), deck(-0.08, 1)])} fill="#a9acae" />
        <polygon points={pts([deck(0.03, 0), deck(0.95, 0), deck(0.95, 1), deck(0.03, 1)])} fill="#bfba7c" />
        <polygon points={pts([deck(0.57, 0.3), deck(0.72, 0.3), deck(0.8, 1), deck(0.57, 1)])} fill="#3c4038" fillOpacity="0.5" />
        <polygon points={pts([deck(0.26, 0.4), deck(0.38, 0.4), deck(0.38, 1), deck(0.22, 1)])} fill="#3c4038" fillOpacity="0.35" />
        {[0.12, 0.16, 0.24, 0.29, 0.34, 0.58, 0.62, 0.66, 0.7, 0.8, 0.84].map((t) => (
          <Deck key={t} t={t} a={0} b={1} stroke="#3c4038" strokeWidth={t === 0.29 || t === 0.7 ? 1.8 : 0.7} />
        ))}
        {Array.from({ length: 12 }, (_, i) => (
          <path
            key={i}
            {...ns}
            d={`M${deck(0.05, (i + 0.6) / 12).join(" ")}L${deck(0.38, i / 12).join(" ")}M${deck(0.58, (i + 0.6) / 12).join(" ")}L${deck(0.92, i / 12).join(" ")}`}
            stroke="#34382f"
            strokeWidth="0.9"
            strokeOpacity="0.75"
          />
        ))}
        {[0.17, 0.35, 0.57, 0.8].map((s) => (
          <path key={s} {...ns} d={`M${deck(0, s).join(" ")}L${deck(1, s).join(" ")}`} stroke="#444" strokeWidth="0.9" />
        ))}
        <polygon points={pts([deck(-0.02, 1), deck(1, 1), deck(1, 1.5), deck(-0.02, 1.56)])} fill="#2a2f34" />
        {Array.from({ length: 16 }, (_, i) => (
          <path key={i} {...ns} d={`M${deck(0, 1 + i * 0.035).join(" ")}L${deck(1, 1.012 + i * 0.035).join(" ")}`} stroke="#454b50" strokeWidth="0.7" />
        ))}
        <Deck t={-0.05} a={1} b={1.26} stroke="#a5a8ac" strokeWidth="3.5" />
        <Deck t={0.05} a={0} b={1.4} stroke="#f4f4f4" strokeWidth="1.2" />
        <Deck t={0.23} a={0} b={1.5} stroke="#fff" strokeWidth="1.2" strokeDasharray="5 11" />
        <Deck t={0.39} a={0} b={1.5} stroke="#fff" strokeWidth="1.1" />
        <Deck t={0.46} a={0} b={1.5} stroke="#c2bc7e" strokeWidth="3.6" />
        <Deck t={0.54} a={0} b={1.5} stroke="#fff" strokeWidth="1.2" />
        <Deck t={0.74} a={0} b={1.5} stroke="#fff" strokeWidth="1.2" strokeDasharray="5 11" />
        <Deck t={0.93} a={0} b={1.5} stroke="#fff" strokeWidth="1.3" />
        <path {...ns} d="M1235 486L1250 486L1242 510ZM1250 503L1360 507M1042 950L1205 962" stroke="#d6d8da" strokeWidth="1.2" />
      </g>

      {/* near end of the deck and the embankment beside it */}
      <g transform="translate(1400 420) scale(0.333333)">
        <polygon points={pts(rim)} fill="#85801a" />
        <path
          {...ns}
          stroke="#c0b51c"
          strokeWidth="0.9"
          d={Array.from({ length: 34 }, (_, i) => {
            const f = i / 2;
            const a = rim[Math.floor(f)];
            const b = rim[Math.min(17, Math.floor(f) + 1)];
            const k = f - Math.floor(f);
            return `M${316 - i} ${507 + i * 2.4}L${a[0] + (b[0] - a[0]) * k} ${a[1] + (b[1] - a[1]) * k}`;
          }).join("")}
        />
        <path d="M258 632L342 634L262 644Z" />
        <path {...ns} d="M314 486L222 702" stroke="#7b6a76" strokeWidth="4" />
        <path {...ns} d="M300 486L205 710" stroke="#b3b5b8" strokeWidth="4" />
        <path {...ns} d="M113 473L85 530" stroke="#7b6a76" strokeWidth="2" />
      </g>

      <g transform="translate(1000 260) scale(0.419640 0.333333)">
        <g transform="translate(0 1020)">
          <path d={pinkEdge} fill="#982b62" stroke="#ff4fa3" strokeWidth="2" vectorEffect="non-scaling-stroke" />
          <g stroke="#ff4fa3" strokeWidth="1">
            {meshLines.map((l, i) => (
              <polyline key={i} points={pts(l)} {...ns} />
            ))}
            {fans.map(([cx, cy, ax, ay, bx, by, n], i) => (
              <path
                key={i}
                {...ns}
                strokeWidth="0.7"
                d={Array.from({ length: n }, (_, k) => `M${cx} ${cy}L${ax + ((bx - ax) * k) / (n - 1)} ${ay + ((by - ay) * k) / (n - 1)}`).join("")}
              />
            ))}
          </g>
          <path d="M517 913L600 932L860 960L885 960L870 995L562 955Z" fill="#ff4fa3" fillOpacity="0.6" />
          <path d="M700 945L770 920L870 880L875 900L845 978L705 955Z" fill="#262b30" />
          <path {...ns} d="M730 950L850 900M760 955L860 920M790 900L840 960" stroke="#4a5055" strokeWidth="1" />
          <path {...ns} d="M578 942L700 950L850 978M590 958V930L598 915M833 995V960" stroke="#c8c8c8" strokeWidth="2" />
          <path {...ns} d="M700 948L708 920M730 952L748 897M773 960L800 882M818 968L853 866" stroke="#fff" strokeWidth="1.5" />
          <path {...ns} d="M840 970L868 868" stroke="#8f8f92" strokeWidth="5" />
          <path {...ns} d="M835 965L880 830L903 765" stroke="#b0b0b2" strokeWidth="2.2" />
          <path {...ns} d="M903 765L915 722" stroke="#b0a0a8" strokeWidth="1" strokeDasharray="2 4" />
          <path {...ns} d="M712 948L745 865L800 717" stroke="#b5ae72" strokeWidth="2" />
          <path {...ns} d="M718 948L748 865" stroke="#c9c38a" strokeWidth="3" />
          <path {...ns} d="M1050 110L1032 152" stroke="#b5ae72" strokeWidth="2.5" />
          <path {...ns} d="M1120 155L1105 198" stroke="#9a9a9c" strokeWidth="2.5" />
          <path {...ns} d="M954 322V212Q945 205 920 197M954 212Q960 205 988 202" stroke="#b9bbbf" strokeWidth="1.8" />
          <path {...ns} d="M829 638V502Q822 490 790 481M829 502Q835 492 866 490" stroke="#b9bbbf" strokeWidth="2" />
          <path {...ns} d="M384 1032L880 1000" stroke="#111" strokeWidth="1.2" />
          <path d="M872 985L965 995L873 1018Z" />
          <path {...ns} d="M122 1043V940M122 1043L75 1022M122 1043L180 1014" stroke="#777" strokeWidth="1" />
        </g>

        <Lamp x={1130} y={20} b={70} w={8} />
        <Lamp x={1202} y={50} b={105} />
        <Lamp x={1269} y={85} b={143} />
        <Lamp x={1322} y={125} b={185} />
        <Lamp x={1357} y={172} b={225} />
        <Lamp x={1371} y={222} b={285} />
        <Lamp x={1366} y={282} b={340} w={16} />
        <Lamp x={1334} y={350} b={425} w={18} s={1.8} />
        <Lamp x={1299} y={432} b={505} w={18} />
        <Lamp x={1262} y={520} b={610} w={20} />
        <Lamp x={1214} y={626} b={730} w={23} />
        <Lamp x={1158} y={752} b={850} w={25} />
        <Lamp x={1126} y={828} b={950} w={27} />
        <Lamp x={1048} y={1001} b={1125} w={28} s={1.6} />
      </g>
      <g fontFamily="Liberation Sans" fontSize="16" fill="#777">
        <text x="1053" y="915">z</text>
        <text x="1026" y="938">y</text>
        <text x="1078" y="940">x</text>
      </g>
    </svg>
  );
}

const Grip = ({ cls }: { cls: string }) => <div className={"h-[3px] border-y border-[#ccd3e3] " + cls} />;

export default function App() {
  return (
    <div className="relative flex h-[992px] w-[1658px] flex-col overflow-hidden bg-[#ebecf0] font-['Open_Sans','Noto_Sans',sans-serif] text-[16px] leading-5 text-black">
      <Defs />
      {/* title bar */}
      <div className="flex h-[26px] items-center bg-white pb-px">
        <svg viewBox="0 0 19 20" className="mt-[-2px] h-[20px] w-[19px]">
          <rect width="19" height="20" fill="#1a1a1a" />
          <path d="M0 3Q4 1 7 6Q8 10 12 10L17 13L11 19L6 17L7 14L3 11L0 12Z" fill="#eee" />
          <path d="M2 6Q5 9 4 12M9 12Q11 14 10 17" fill="none" stroke="#555" />
          <text x="13" y="9" fontSize="9" fill="#fff" fontWeight="700" fontFamily="Liberation Sans">6</text>
        </svg>
        <Fit w={506} className="ml-[5px]">WorkZones with import.3dm (56 MB) - Rhino 6 Not For Resale - [Perspective]</Fit>
      </div>
      {/* menu */}
      <div className="flex h-[24px] items-center bg-white pt-[3px]">
        {menu.map(([a, u, b, x, e], i) => (
          <div key={i} className="shrink-0" style={{ marginLeft: x - (i ? menu[i - 1][4] : 0) }}>
            <Fit w={e - x}>
              {a}
              <span className="underline underline-offset-[3px]">{u}</span>
              {b}
            </Fit>
          </div>
        ))}
      </div>
      {/* command history */}
      <div className="mt-[5px] flex h-[128px]">
        <div className="ml-[1px] w-[3px] border-x border-[#ccd3e3]" />
        <div className="ml-[2px] flex w-[1652px] flex-col bg-white pl-[1px]">
          <div className="flex h-[104px] flex-col overflow-hidden border-b border-[#c5cee0]">
            <svg viewBox="0 0 200 5" className="h-[5px] w-[200px] shrink-0">
              <path d="M129.500 0V2.500M138.500 0V2.500" stroke="#222" />
            </svg>
            {log.map(([t, w], i) => (
              <div key={i} className="h-5 shrink-0">
                <Fit w={w}>{t}</Fit>
              </div>
            ))}
          </div>
          <div className="flex h-6 items-center pb-[2px]">
            <Fit w={76} className="font-bold">Command:</Fit>
            <div className="ml-[4px] h-5 w-px bg-black" />
          </div>
        </div>
      </div>
      {/* toolbar tabs */}
      <div className="mt-[3px] h-[5px] border-t border-[#d5daea]" />
      <div className="flex h-[74px]">
        <div className="ml-[1px] h-[70px] w-[3px] shrink-0 border-x border-[#ccd3e3]" />
        <div className="flex grow flex-col">
          <div className="flex h-[23px] border-b border-[#c5cee0] pl-[2px]">
            {toolTabs.map(([t, l, r, a, b], i) => {
              const w = r - l;
              return (
                <div key={t} className={"relative h-[23px] shrink-0 " + (i === 0 ? "z-10" : "")} style={{ width: w }}>
                  <svg className="absolute left-0 top-0 h-[23px] w-full overflow-visible">
                    <path
                      d={
                        i === 0
                          ? `M0.500 23V9L4 3Q5 0.500 8 0.500H${w - 4}Q${w} 0.500 ${w} 5V23`
                          : `M-13 22.500L4 3Q6 0.500 9 0.500H${w - 4}Q${w} 0.500 ${w} 5V22.500Z`
                      }
                      fill={i === 0 ? "#ebecf0" : "#d8d8d8"}
                      stroke="#c2cbe0"
                    />
                  </svg>
                  <div className="relative pt-[2.5px]" style={{ paddingLeft: a - l }}>
                    <Fit w={b - a}>{t}</Fit>
                  </div>
                </div>
              );
            })}
          </div>
          <div className="flex pl-[2px] pt-[2px]">
            {toolbar.map((n, i) => (
              <Icon key={i} n={n.replace("*", "")} fly={n.endsWith("*")} />
            ))}
          </div>
        </div>
      </div>
      <div className="mt-[-1px] h-px shrink-0 bg-[#d5daea]" />
      {/* main area */}
      <div className="flex h-[727px] shrink-0 overflow-hidden">
        <div className="flex w-[40px] shrink-0 flex-col border-r border-[#dde1ea] pt-[6px]">
          <Grip cls="w-[36px]" />
          <div className="ml-[-2px] mt-[4px] flex flex-col">
            {side1.map((n) => (
              <Icon key={n} n={n} />
            ))}
          </div>
        </div>
        <div className="flex w-[40px] shrink-0 flex-col border-r border-[#dde1ea] pt-[6px]">
          <Grip cls="ml-[5px] w-[32px]" />
          <div className="ml-[3px] mt-[4px] flex flex-col">
            {side2.map((n) => (
              <Icon key={n} n={n} />
            ))}
          </div>
        </div>
        <div className="flex w-[40px] shrink-0 flex-col border-r border-[#dde1ea] pt-[6px]">
          <Grip cls="ml-[5px] w-[32px] shrink-0" />
          <div className="ml-[3px] mt-[5px] flex flex-col">
            {side3.map((n) => (
              <Icon key={n} n={n.replace("*", "")} fly={n.endsWith("*")} />
            ))}
          </div>
        </div>
        {/* docked panel */}
        <div className="flex w-[887px] shrink-0 flex-col pl-[4px] pt-[6px]">
          <Grip cls="ml-[1px] w-[875px] shrink-0" />
          <div className="mt-[4px] flex h-[24px] shrink-0">
            {panelTabs.map(([n, t, w], i) => (
              <div key={i} className="relative flex w-[94.2px] shrink-0 items-center">
                <svg className="absolute left-0 top-0 h-[24px] w-full overflow-visible">
                  <path
                    d="M0.500 24V5Q1 0.500 5 0.500H72Q77 0.500 80 4L96 24"
                    fill={n === "gg" ? "#f0f1f6" : "#d8d8d8"}
                    stroke="#c2cbe0"
                  />
                </svg>
                <div className="relative flex items-center pl-[1px] pt-[1px]">
                  <Icon n={n} size="h-[25px] w-[25px]" />
                  <Fit w={w} className="ml-[1px]">{t}</Fit>
                </div>
              </div>
            ))}
            <svg viewBox="0 0 28 28" className="ml-[6px] mt-[2px] h-[22px] w-[22px] shrink-0">
              <Gear c="#b9babd" />
            </svg>
          </div>
          <div className="flex h-[691px] w-[875px] border-l-2 border-r-2 border-t-2 border-[#828795] bg-white">
            <div className="w-[851px] shrink-0 overflow-hidden pl-[22px]">
              {rows.map((_, i) => (
                <TreeRow key={i} i={i} />
              ))}
            </div>
            <div className="flex w-[18px] shrink-0 flex-col items-center bg-[#f0f0f0]">
              <svg viewBox="0 0 18 39" className="h-[39px] w-[18px] shrink-0">
                <path d="M5 13L9.500 8.500L14 13" fill="none" stroke="#505050" strokeWidth="2" />
              </svg>
              <div className="h-[543px] w-[18px] shrink-0 bg-[#cdcdcd]" />
              <svg viewBox="0 0 18 106" className="h-[106px] w-[18px] shrink-0">
                <path d="M5 95L9.500 99.500L14 95" fill="none" stroke="#505050" strokeWidth="2" />
              </svg>
            </div>
          </div>
        </div>
        {/* 3D view */}
        <div className="relative flex w-[651px] shrink-0 flex-col pt-[3px]">
          <div className="h-px w-full shrink-0 bg-[#b4bfda]" />
          <Scene />
          <div className="absolute left-0 top-[4px] flex h-[23px] w-[113px] items-center bg-[#8ba3c0] pb-[2px] pl-[10px]">
            <Fit w={80} className="font-bold">Perspective</Fit>
            <div className="ml-[10px] h-5 w-px bg-black" />
            <svg viewBox="0 0 10 6" className="ml-[2px] h-[5px] w-[9px]">
              <path d="M0 0H10L5 6Z" />
            </svg>
          </div>
        </div>
      </div>
    </div>
  );
}
